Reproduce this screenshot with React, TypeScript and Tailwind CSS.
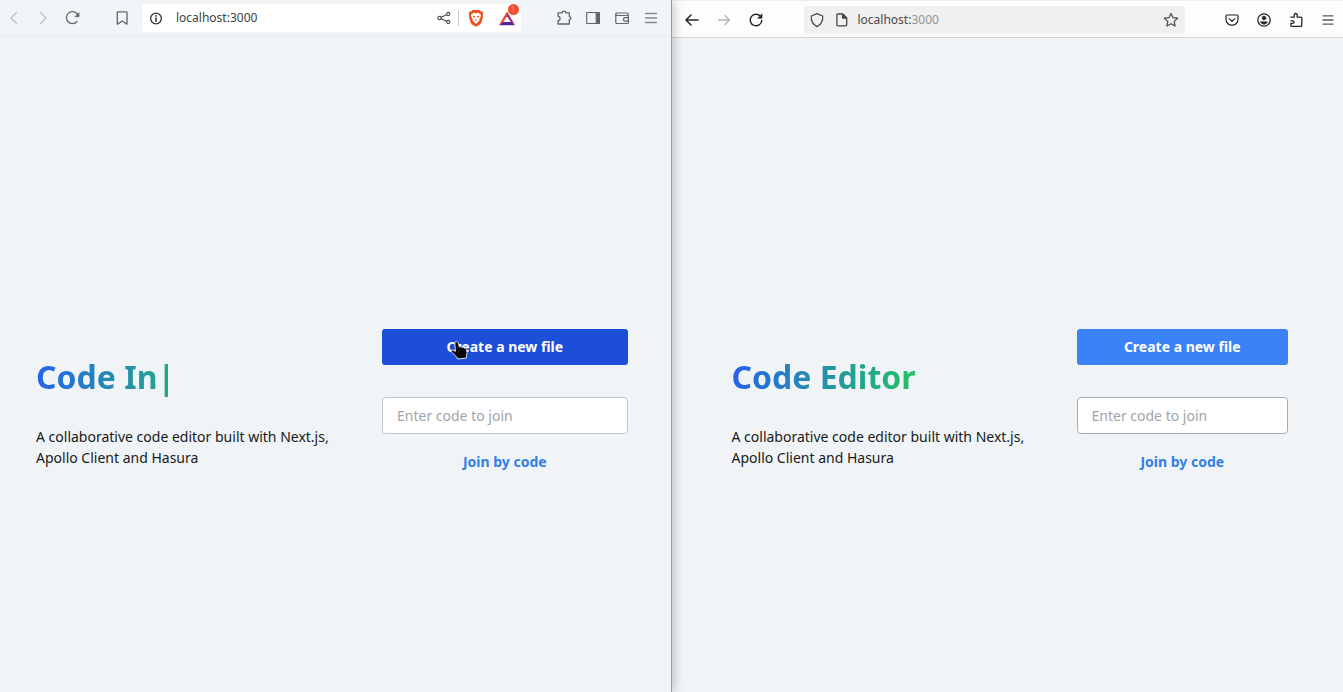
import type { ReactNode } from "react";

type IconProps = { label: string; className?: string; children: ReactNode };

function ToolButton({ label, className = "", children }: IconProps) {
  return (
    <button type="button" aria-label={label} className={`flex size-5 shrink-0 items-center justify-center ${className}`}>
      {children}
    </button>
  );
}

function Svg({ children, width = 1.3 }: { children: ReactNode; width?: number }) {
  return (
    <svg viewBox="0 0 20 20" className="size-5 shrink-0" fill="none" stroke="currentColor" strokeWidth={width} strokeLinecap="round" strokeLinejoin="round">
      {children}
    </svg>
  );
}

function BraveBar() {
  return (
    <header className="flex h-[37px] items-center gap-[9px] border-b border-[#e9edef] bg-[#f2f5f7] pr-[10px] pl-1 text-[#5d676c]">
      <ToolButton label="Back" className="text-[#b9bec1]"><Svg width={1.2}><path d="M12.5 4.5 7 10l5.5 5.5" /></Svg></ToolButton>
      <ToolButton label="Forward" className="text-[#b9bec1]"><Svg width={1.2}><path d="m7.5 4.5 5.5 5.5-5.5 5.5" /></Svg></ToolButton>
      <ToolButton label="Reload">
        <Svg><path d="M15 13.500A6 6 0 1 1 16 7.500" /><path d="M17 5v3.700h-3.700z" fill="currentColor" strokeWidth="0.8" /></Svg>
      </ToolButton>
      <ToolButton label="Bookmark" className="ml-[21px]"><Svg><path d="M6 3.800h8.200c.5 0 .8.300.8.800v11.600L10.200 13l-4.900 3.200V4.600c0-.5.200-.8.700-.8Z" /></Svg></ToolButton>
      <div className="ml-px flex h-7 min-w-0 flex-1 items-center rounded bg-white px-1">
        <span className="text-[#303437]">
          <Svg><circle cx="10" cy="10.500" r="5.400" /><path d="M10 10.200v3" strokeWidth="1.600" /><path d="M10 7.800v.1" strokeWidth="1.700" /></Svg>
        </span>
        <input aria-label="Brave address" readOnly value="localhost:3000" className="ml-[10px] w-0 min-w-0 flex-1 bg-transparent text-xs text-[#3b3f42] outline-none" />
        <ToolButton label="Share" className="text-[#44494c]">
          <Svg width={1.1}><circle cx="5.500" cy="10" r="1.700" /><circle cx="14.200" cy="6" r="1.600" /><circle cx="14.200" cy="14" r="1.600" /><path d="m7.200 9.200 5.400-2.500M7.200 10.800l5.400 2.500" /></Svg>
        </ToolButton>
        <span className="mx-1 h-4 w-px bg-[#c6c9cb]" />
        <ToolButton label="Brave Shields" className="ml-[3px]">
          <svg viewBox="0 0 20 20" className="size-5">
            <path d="M6.500 1.900h7l1.400 1.500 1.500.2 1 2-.6 1.500.3 1.500-1.700 6.200-1.800 1.900L10 18.700l-3.600-2-1.800-1.900L2.900 8.600l.3-1.500-.6-1.500 1-2 1.500-.2Z" fill="#f0501f" />
            <path d="m10 5.300 2.200-.6 2.500 1.900.3 1.400-1.700 3.300.2 1.200-1.500 1.300-2 2.300-2-2.300-1.500-1.300.2-1.200L5 8l.3-1.400 2.500-1.900Z" fill="#fff" />
            <path d="M6.600 7.600 9 8.200l-.4 1.500-1.300-.4Zm6.800 0-2.400.6.400 1.500 1.300-.4ZM9 11.200l1 .5 1-.5-.4 1.600h-1.200Z" fill="#f0501f" />
          </svg>
        </ToolButton>
        <ToolButton label="Brave Rewards" className="relative ml-[11px]">
          <svg viewBox="0 0 20 20" className="size-5">
            <path d="M10 3.500 2 17l4-2.500 4-6.200Z" fill="#f04b2a" />
            <path d="m10 3.500 8 13.500-4-2.500-4-6.200Z" fill="#a12d7e" />
            <path d="M2 17.200 6 14h8l4 3.200Z" fill="#5b248c" />
          </svg>
          <span className="absolute -top-1 left-[11px] flex size-[11px] items-center justify-center rounded-full bg-[#ef4f2d] text-[8px] leading-none text-[#ff9c80]">1</span>
        </ToolButton>
      </div>
      <ToolButton label="Extensions" className="ml-6">
        <Svg><path d="M4 4.800h4.300c-.1-1.200.6-1.600 1.700-1.600s1.800.4 1.700 1.600h3.600v3.900c1.100-.1 1.600.7 1.600 1.400s-.5 1.500-1.600 1.400V16H4v-3.300c1.600-.2 2.100-1.200 2.100-2.300S5.600 8.300 4 8.100Z" /></Svg>
      </ToolButton>
      <ToolButton label="Sidebar"><Svg width={1.1}><path d="M3.700 4.500h12.600v11H3.700Z" /><path d="M13.200 4.500h3.100v11h-3.100Z" fill="currentColor" /></Svg></ToolButton>
      <ToolButton label="Wallet"><Svg width={1.2}><path d="M16.200 7.500V6c0-.7-.5-1-1-1H5c-.7 0-1.200.4-1.200 1.100S4.300 7.500 5 7.500h10.500c.6 0 .9.400.9.900v6.100c0 .6-.4 1-1 1H5c-.7 0-1.200-.5-1.200-1.200V6.200" /><path d="M16.400 9.700h-3.200a1.700 1.700 0 0 0 0 3.500h3.200" /></Svg></ToolButton>
      <ToolButton label="Brave menu" className="text-[#858b8e]"><Svg><path d="M4.500 5.500h11M4.500 10h11M4.500 14.500h11" /></Svg></ToolButton>
    </header>
  );
}

function FirefoxBar() {
  return (
    <header className="flex h-[38px] items-center gap-3 border-t border-b border-t-[#eeeeef] border-b-[#d5d7d9] bg-[#fdfdfe] pt-0.5 pr-[5px] pl-[10px] text-[#252529]">
      <ToolButton label="Back"><Svg width={1.5}><path d="M16 10H4M9 5l-5 5 5 5" /></Svg></ToolButton>
      <ToolButton label="Forward" className="text-[#b5b5b7]"><Svg><path d="M4.500 10h11M11 5.500l4.500 4.500-4.500 4.500" /></Svg></ToolButton>
      <ToolButton label="Reload"><Svg width={1.4}><path d="M14.500 6.300a5.800 5.800 0 1 0 1.300 4.200" /><path d="M16 4.200v4h-4Z" fill="currentColor" strokeWidth="0.7" /></Svg></ToolButton>
      <div className="ml-[26px] flex h-7 min-w-0 flex-1 items-center rounded bg-[#f0f0f1] px-1">
        <ToolButton label="Tracking protection" className="-ml-px text-[#45454a]"><Svg width={1.2}><path d="M10 3.600 15.700 6c.4 4.700-1.200 8.300-5.700 10.600C5.500 14.300 3.900 10.700 4.300 6Z" /></Svg></ToolButton>
        <ToolButton label="Site information" className="ml-[5px] text-[#45454a]"><Svg><path d="M5.800 4h5l3.900 3.900v6.900c0 .7-.4 1.100-1.100 1.100H6c-.7 0-1.100-.4-1.100-1.100V5c0-.6.300-1 .9-1Z" /><path d="M10.600 4.200v3.900h3.900Z" fill="currentColor" /></Svg></ToolButton>
        <button type="button" aria-label="Firefox address" className="ml-1.5 min-w-0 flex-1 text-left text-xs text-[#47474b]">localhost:<span className="text-[#939396]">3000</span></button>
        <ToolButton label="Favorite" className="text-[#4b4b50]"><Svg width={1.2}><path d="m10 3.400 2 4.300 4.600.5-3.400 3.200.9 4.700L10 13.800l-4.100 2.300.9-4.700-3.400-3.200L8 7.700Z" /></Svg></ToolButton>
      </div>
      <ToolButton label="Pocket" className="ml-[25px]"><Svg width={1.2}><path d="M4.900 5h10.200c.6 0 .9.400.9 1v3.200c0 3.400-2.500 6-6 6s-6-2.600-6-6V6c0-.6.300-1 .9-1Z" /><path d="m7.200 8.600 2.800 2.700 2.800-2.700" /></Svg></ToolButton>
      <ToolButton label="Account"><Svg><circle cx="10" cy="10" r="6.200" /><circle cx="10" cy="8" r="1.900" fill="currentColor" strokeWidth="0.5" /><path d="M6.700 11.800h6.600c-.3 1.600-1.500 2.400-3.300 2.400s-3-.8-3.300-2.400Z" fill="currentColor" strokeWidth="0.5" /></Svg></ToolButton>
      <ToolButton label="Add-ons"><Svg><path d="M4.900 7.200h3.300V5.100c0-1 .6-1.600 1.500-1.600s1.500.6 1.500 1.600v2.100h3.700c.6 0 .9.300.9.900v7.300c0 .6-.3.900-.9.900H5.800c-.6 0-.9-.3-.9-.9v-2h1.700c1 0 1.500-.5 1.500-1.300s-.5-1.300-1.500-1.300H4.900" /></Svg></ToolButton>
      <ToolButton label="Firefox menu" className="text-[#5b5b60]"><Svg><path d="M5 5.800h10M5 10h10M5 14.200h10" /></Svg></ToolButton>
    </header>
  );
}

type LandingProps = { title: string; caret: string; buttonColor: string; inset: string; fieldBorder: string; pointer?: boolean };

function Landing({ title, caret, buttonColor, inset, fieldBorder, pointer = false }: LandingProps) {
  return (
    <main className={`flex flex-1 items-start bg-[#f1f4f6] ${inset}`}>
      <section className="w-[296px] shrink-0 pt-6">
        <h1 className="w-[190px] bg-linear-to-r/srgb from-[#2563eb] to-[#22c55e] bg-clip-text text-[32px] leading-[48px] font-bold whitespace-nowrap text-transparent">
          {title}<span className={caret}>|</span>
        </h1>
        <p className="mt-[25px] text-sm leading-[21px] text-[#17191b]">A collaborative code editor built with Next.js, Apollo Client and Hasura</p>
      </section>
      <form className="flex min-w-0 flex-1 flex-col items-center" onSubmit={(event) => event.preventDefault()}>
        <button type="button" className={`relative h-9 w-full rounded-[3px] text-sm font-bold text-white ${buttonColor}`}>
          Create a new file
          {pointer && (
            <svg aria-hidden="true" viewBox="0 0 20 20" className="absolute top-[11px] left-[66px] size-5">
              <path d="M8.600 1.400c1 0 1.500.7 1.700 1.500l.9 4 1.600-.2 1 .6 1.500-.1.900.8 1.400.1.900 1 .6 3.600-.7 2.600.1 2.800-8.800.9-1-2-5.200-5c-.9-1.300.3-2.500 1.700-1.800l2.200 1.200L6.900 3.900c-.2-1.500.5-2.500 1.700-2.500Z" fill="#080808" stroke="#d9dfef" strokeWidth="1" />
            </svg>
          )}
        </button>
        <input aria-label="Enter code to join" type="text" placeholder="Enter code to join" className={`mt-8 h-[37px] w-full rounded border bg-white px-3.5 text-sm text-[#17191b] outline-none placeholder:text-[#9fa4aa] ${fieldBorder}`} />
        <button type="submit" className="mt-[17px] text-sm leading-[21px] font-bold text-[#327fe9]">Join by code</button>
      </form>
    </main>
  );
}

export default function App() {
  return (
    <div className="grid min-h-screen grid-cols-2 font-['Noto_Sans',sans-serif]">
      <div className="relative z-10 flex min-w-0 flex-col border-r border-[#989c9f] shadow-[2px_0_10px_rgba(0,0,0,0.22)]">
        <BraveBar />
        <Landing title="Code In" caret="font-bold" buttonColor="bg-[#1d4ed8]" inset="gap-[50px] pt-[292px] pr-[43px] pl-9" fieldBorder="border-[#c1c5c8]" pointer />
      </div>
      <div className="flex min-w-0 flex-col">
        <FirefoxBar />
        <Landing title="Code Editor" caret="font-bold opacity-5" buttonColor="bg-[#3b82f6]" inset="gap-[49px] pt-[291px] pr-[55px] pl-[60px]" fieldBorder="border-[#a9adb0]" />
      </div>
    </div>
  );
}
